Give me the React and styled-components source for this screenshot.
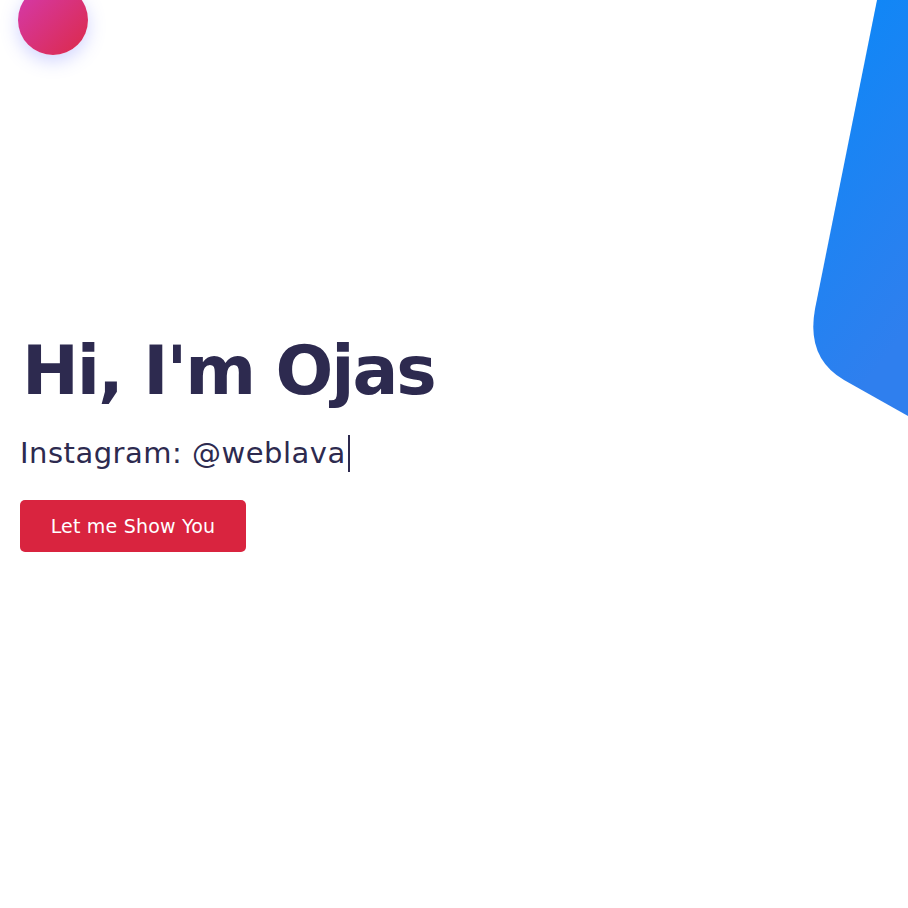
import styled, { createGlobalStyle } from "styled-components";

const GlobalStyle = createGlobalStyle`
    html, body {
        margin: 0;
        padding: 0;
        background: #ffffff;
        overflow: hidden;
    }
    * {
        box-sizing: border-box;
    }
`;

const Page = styled.div`
    position: relative;
    width: 100%;
    height: 908px;
    overflow: hidden;
    font-family: "DejaVu Sans", "Open Sans", sans-serif;
    color: #2d2a4f;
`;

const Ball = styled.div`
    position: absolute;
    left: 18px;
    top: -15px;
    width: 70px;
    height: 70px;
    border-radius: 50%;
    background: linear-gradient(135deg, #d43ab0 0%, #dc2a48 100%);
    box-shadow: 0 6px 18px rgba(90, 100, 255, 0.28);
`;

const Shape = styled.svg`
    position: absolute;
    top: 0;
    right: 0;
    width: 100px;
    height: 420px;
`;

const Hero = styled.section`
    display: flex;
    flex-direction: column;
    align-items: flex-start;
    padding: 334px 20px 0;
`;

const Title = styled.h1`
    margin: 0 0 0 2px;
    font-size: 68px;
    font-weight: 700;
    line-height: 1.1;
    letter-spacing: -2.1px;
`;

const Subtitle = styled.p`
    margin: 26px 0 0;
    font-size: 29px;
    font-weight: 400;
    line-height: 1.2;
    letter-spacing: 0.5px;
    display: flex;
    align-items: center;
`;

const Cursor = styled.span`
    display: inline-block;
    width: 2px;
    height: 37px;
    margin-left: 2px;
    background: #2d2a4f;
`;

const Button = styled.button`
    margin-top: 28px;
    width: 226px;
    height: 52px;
    border: none;
    border-radius: 5px;
    background: #d9243f;
    color: #ffffff;
    font-family: inherit;
    font-size: 19px;
    font-weight: 400;
    letter-spacing: 0.2px;
    cursor: pointer;
`;

const App = () => {
    return (
        <Page>
            <GlobalStyle />
            <Ball />
            <Shape viewBox="808 0 100 420">
                <defs>
                    <linearGradient id="blue" x1="0" y1="0" x2="0.3" y2="1">
                        <stop offset="0%" stopColor="#0a88f8" />
                        <stop offset="100%" stopColor="#2f7fee" />
                    </linearGradient>
                </defs>
                <path
                    d="M 877 0 L 815 309 Q 806 358 844 380 L 908 416 L 908 0 Z"
                    fill="url(#blue)"
                />
            </Shape>
            <Hero>
                <Title>Hi, I'm Ojas</Title>
                <Subtitle>
                    Instagram: @weblava
                    <Cursor />
                </Subtitle>
                <Button>Let me Show You</Button>
            </Hero>
        </Page>
    );
};

export default App;
